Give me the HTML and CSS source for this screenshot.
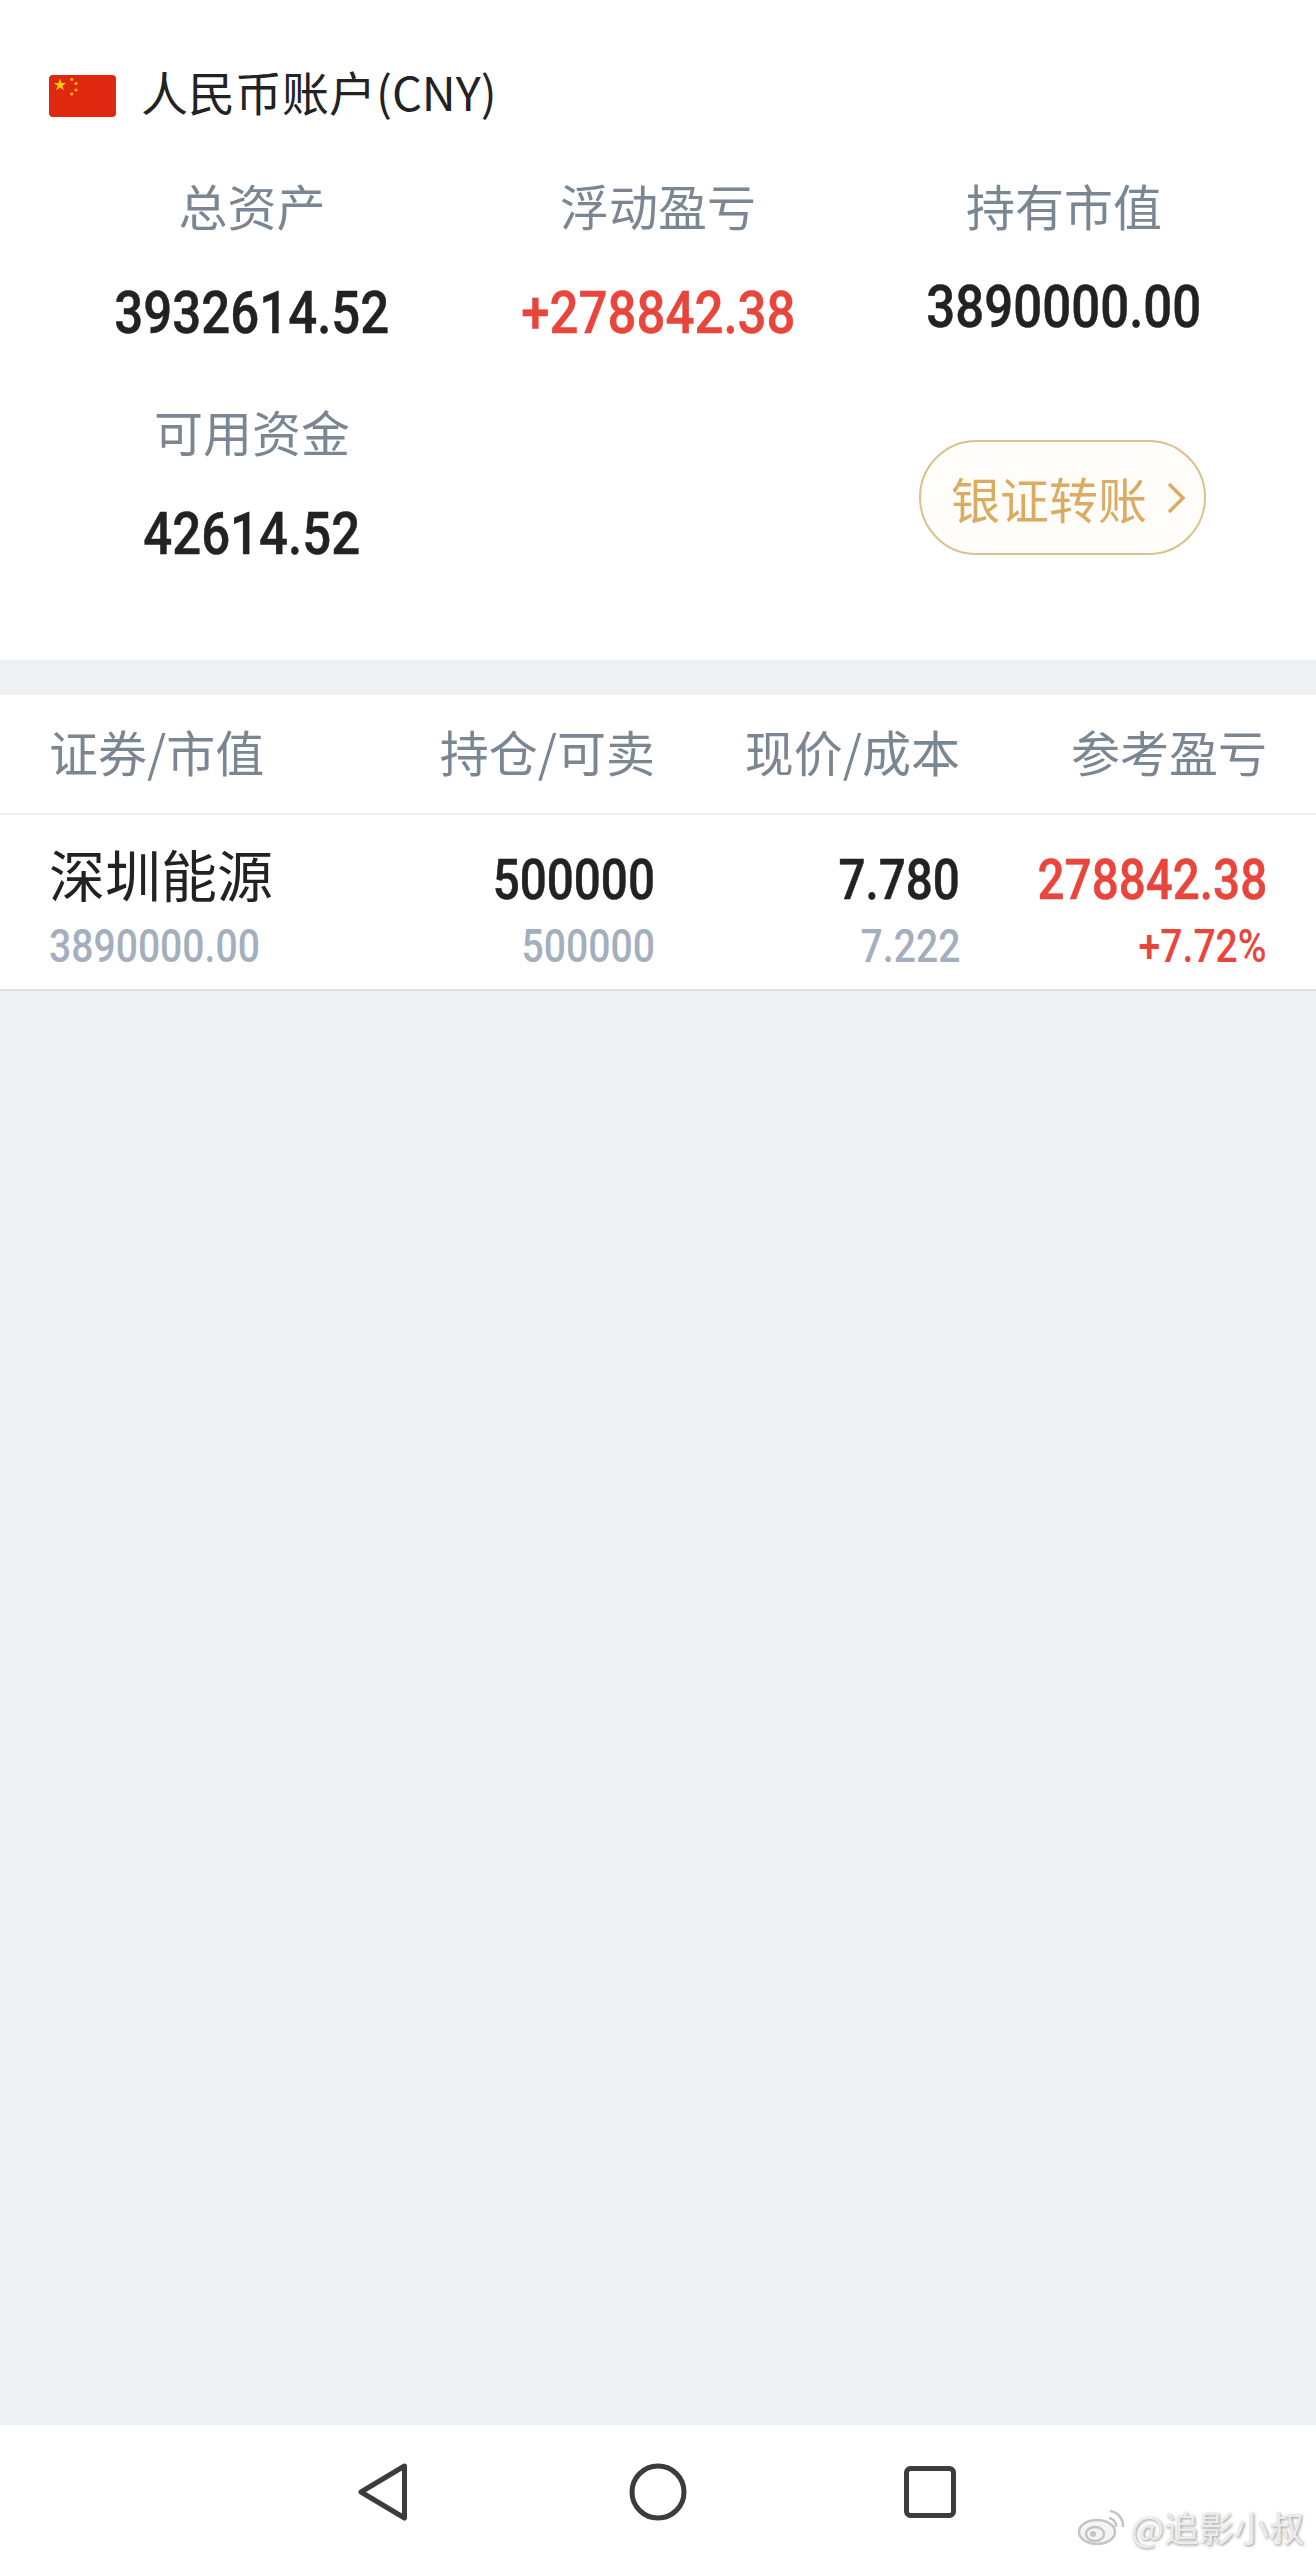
FILE: index.html
```html
<!DOCTYPE html>
<html lang="zh-CN">
  <head>
    <meta charset="UTF-8" />
    <title>人民币账户</title>
    <link rel="stylesheet" href="styles.css">
  </head>

  <body>
    <div class="page">
      <div class="account">
        <div class="account-title">
          <svg class="flag" viewBox="0 0 67 42">
            <rect width="67" height="42" rx="4" fill="#de2910" />
            <polygon points="11,3.5 12.5,8 17.2,8 13.4,10.8 14.8,15.3 11,12.5 7.2,15.3 8.6,10.8 4.8,8 9.5,8" fill="#ffcc00" />
            <circle cx="22.7" cy="4.5" r="1.6" fill="#ffb400" />
            <circle cx="27" cy="8.5" r="1.6" fill="#ffb400" />
            <circle cx="27" cy="15" r="1.6" fill="#ffb400" />
            <circle cx="22.7" cy="19" r="1.6" fill="#ffb400" />
          </svg>
          <span class="account-name">人民币账户(CNY)</span>
        </div>

        <div class="stats">
          <div class="stat">
            <div class="stat-label">总资产</div>
            <div class="stat-value"><span class="num">3932614.52</span></div>
          </div>
          <div class="stat">
            <div class="stat-label">浮动盈亏</div>
            <div class="stat-value red"><span class="num">+278842.38</span></div>
          </div>
          <div class="stat stat-up">
            <div class="stat-label">持有市值</div>
            <div class="stat-value"><span class="num">3890000.00</span></div>
          </div>
          <div class="stat stat-tight">
            <div class="stat-label">可用资金</div>
            <div class="stat-value"><span class="num">42614.52</span></div>
          </div>
          <div class="stat"></div>
          <div class="stat stat-btn">
            <div class="transfer-btn">
              <span>银证转账</span>
              <svg class="chevron" viewBox="0 0 20 32">
                <polyline points="3,2 17,16 3,30" />
              </svg>
            </div>
          </div>
        </div>
      </div>

      <div class="holdings">
        <div class="row-head">
          <div class="col col-name">证券/市值</div>
          <div class="col col-qty">持仓/可卖</div>
          <div class="col col-price">现价/成本</div>
          <div class="col col-profit">参考盈亏</div>
        </div>
        <div class="row">
          <div class="col col-name">
            <div class="stock-name">深圳能源</div>
            <div class="sub"><span class="num">3890000.00</span></div>
          </div>
          <div class="col col-qty">
            <div class="main"><span class="num">500000</span></div>
            <div class="sub"><span class="num">500000</span></div>
          </div>
          <div class="col col-price">
            <div class="main"><span class="num">7.780</span></div>
            <div class="sub"><span class="num">7.222</span></div>
          </div>
          <div class="col col-profit">
            <div class="main red"><span class="num">278842.38</span></div>
            <div class="sub red"><span class="num">+7.72%</span></div>
          </div>
        </div>
      </div>

      <div class="filler"></div>

      <div class="navbar">
        <svg class="nav-icon" viewBox="0 0 60 60">
          <path d="M51.5 4 L8 30 L51.5 56 Z" />
        </svg>
        <svg class="nav-icon" viewBox="0 0 60 60">
          <circle cx="30" cy="30" r="26" />
        </svg>
        <svg class="nav-icon nav-recent" viewBox="0 0 60 60">
          <rect x="6.5" y="6.5" width="47" height="47" rx="4" />
        </svg>
        <div class="watermark">
          <svg class="weibo" viewBox="0 0 48 36">
            <ellipse class="weibo-body" cx="20" cy="23" rx="18" ry="12" />
            <ellipse cx="18" cy="25" rx="9" ry="7" />
            <circle class="weibo-eye" cx="16" cy="25" r="3" />
            <path d="M32 9 A8 8 0 0 1 39 18" />
            <path d="M33 2 A15 15 0 0 1 46 18" />
          </svg>
          <span>@追影小叔</span>
        </div>
      </div>
    </div>
  </body>
</html>
```

FILE: styles.css
```css
* {
  padding: 0;
  margin: 0;
  box-sizing: border-box;
}

body {
  font-family: "Noto Sans CJK SC", "Noto Sans", sans-serif;
  background: #edf1f4;
  color: #222;
}

.page {
  height: 2559px;
  display: flex;
  flex-direction: column;
}

.num {
  display: inline-block;
  font-family: Roboto, "Liberation Sans", sans-serif;
  font-weight: 500;
  transform: scaleX(0.85);
}

.stat-value .num,
.main .num {
  -webkit-text-stroke: 0.5px currentColor;
}

.red {
  color: #e8453c;
}

/* 账户信息 */
.account {
  height: 660px;
  background: #fff;
  padding: 75px 49px 0;
}

.account-title {
  display: flex;
  align-items: center;
  height: 42px;
  font-size: 47px;
  line-height: 42px;
}

.account-name {
  padding-bottom: 10px;
}

.flag {
  width: 67px;
  height: 42px;
  margin-right: 25px;
}

.stats {
  display: grid;
  grid-template-columns: repeat(3, 406px);
  grid-auto-rows: 226px;
  margin-top: 53px;
}

.stat {
  text-align: center;
}

.stat-label {
  font-size: 49px;
  line-height: 70px;
  color: #7a8793;
}

.stat-value {
  font-size: 60px;
  line-height: 70px;
  margin-top: 32px;
}

.stat-up .stat-value {
  margin-top: 26px;
}

.stat-tight .stat-value {
  margin-top: 27px;
}

.stat-btn {
  display: flex;
  justify-content: center;
  padding: 44px 3px 0 0;
}

.transfer-btn {
  width: 287px;
  height: 115px;
  border: 2px solid #dcc08e;
  border-radius: 58px;
  background: #fffdf9;
  color: #dcab62;
  font-size: 49px;
  display: flex;
  align-items: center;
  padding-left: 30px;
}

.chevron {
  width: 20px;
  height: 32px;
  margin-left: 19px;
  fill: none;
  stroke: #dcab62;
  stroke-width: 3.5;
}

/* 持仓列表 */
.holdings {
  margin-top: 35px;
  background: #fff;
  border-bottom: 2px solid #dfe3e6;
}

.row-head,
.row {
  display: flex;
  padding: 0 49px;
}

.row-head {
  height: 120px;
  align-items: center;
  border-bottom: 2px solid #eff2f4;
  font-size: 49px;
  line-height: 70px;
  padding-bottom: 6px;
  color: #7a8793;
}

.row {
  height: 174px;
}

.col {
  text-align: right;
}

.col-name {
  width: 300px;
  text-align: left;
}

.col-qty {
  width: 306px;
}

.col-price {
  width: 305px;
}

.col-profit {
  width: 307px;
}

.col-name .num {
  transform-origin: left center;
}

.row .col-qty .num,
.row .col-price .num,
.row .col-profit .num {
  transform-origin: right center;
}

.stock-name {
  font-size: 56px;
  line-height: 70px;
  margin-top: 23px;
}

.main {
  font-size: 56px;
  line-height: 70px;
  margin-top: 25px;
}

.sub {
  font-size: 46px;
  line-height: 54px;
  color: #a3afbc;
}

.col-name .sub {
  margin-top: 7px;
}

.sub.red {
  color: #e8453c;
}

.filler {
  flex: 1;
}

/* 底部导航 */
.navbar {
  height: 134px;
  background: #fff;
  display: flex;
  justify-content: center;
  align-items: center;
  gap: 215px;
  padding-right: 4px;
  position: relative;
}

.nav-icon {
  width: 60px;
  height: 60px;
  fill: none;
  stroke: #3c3c3c;
  stroke-width: 5;
  stroke-linejoin: round;
}

.nav-recent {
  margin-left: -3px;
}

.watermark {
  position: absolute;
  right: 12px;
  bottom: 11px;
  display: flex;
  align-items: center;
  gap: 6px;
  font-size: 35px;
  line-height: 42px;
  color: #ececec;
  text-shadow: 1px 1px 3px #8f8f8f;
}

.weibo {
  width: 48px;
  height: 36px;
  fill: none;
  stroke: #c4c4c4;
  stroke-width: 2.5;
}

.weibo-body {
  fill: #f4f4f4;
}

.weibo-eye {
  fill: #c4c4c4;
  stroke: none;
}
```
